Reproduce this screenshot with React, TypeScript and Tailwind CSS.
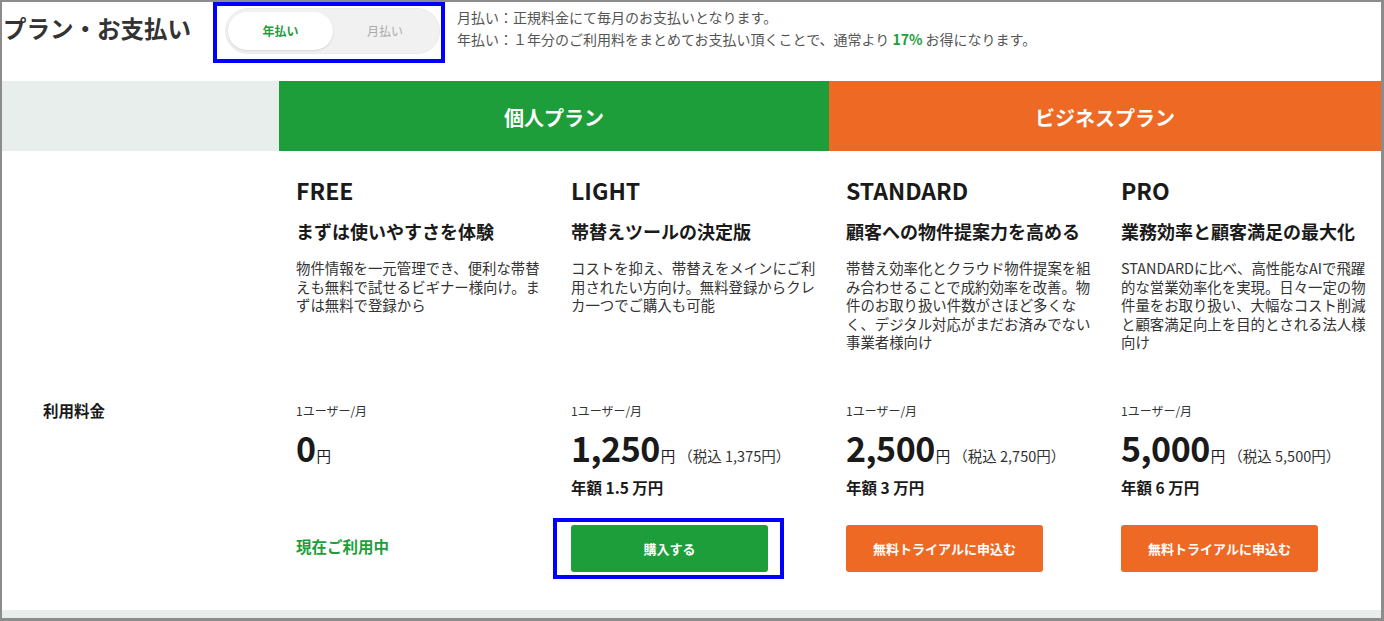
import React from "react";

const GREEN = "bg-[#1e9e3a]";

type Plan = {
  name: string;
  sub: string;
  desc: string[];
  price: string;
  tax?: string;
  annual?: string;
  action: "current" | "buy" | "trial";
};

const plans: Plan[] = [
  {
    name: "FREE",
    sub: "まずは使いやすさを体験",
    desc: ["物件情報を一元管理でき、便利な帯替", "えも無料で試せるビギナー様向け。ま", "ずは無料で登録から"],
    price: "0",
    action: "current",
  },
  {
    name: "LIGHT",
    sub: "帯替えツールの決定版",
    desc: ["コストを抑え、帯替えをメインにご利", "用されたい方向け。無料登録からクレ", "カ一つでご購入も可能"],
    price: "1,250",
    tax: "（税込 1,375円）",
    annual: "年額 1.5 万円",
    action: "buy",
  },
  {
    name: "STANDARD",
    sub: "顧客への物件提案力を高める",
    desc: [
      "帯替え効率化とクラウド物件提案を組",
      "み合わせることで成約効率を改善。物",
      "件のお取り扱い件数がさほど多くな",
      "く、デジタル対応がまだお済みでない",
      "事業者様向け",
    ],
    price: "2,500",
    tax: "（税込 2,750円）",
    annual: "年額 3 万円",
    action: "trial",
  },
  {
    name: "PRO",
    sub: "業務効率と顧客満足の最大化",
    desc: [
      "STANDARDに比べ、高性能なAIで飛躍",
      "的な営業効率化を実現。日々一定の物",
      "件量をお取り扱い、大幅なコスト削減",
      "と顧客満足向上を目的とされる法人様",
      "向け",
    ],
    price: "5,000",
    tax: "（税込 5,500円）",
    annual: "年額 6 万円",
    action: "trial",
  },
];

function PlanColumn({ p }: { p: Plan }) {
  return (
    <div className="flex flex-col pl-[17px]">
      <div className="h-[248px] pt-[24px]">
        <div className="text-[23px] leading-[30px] font-bold text-[#1a1a1a]">{p.name}</div>
        <div className="mt-[13px] text-[18px] leading-[27px] font-bold text-[#1a1a1a] whitespace-nowrap">{p.sub}</div>
        <div className="mt-[14px] text-[14.4px] leading-[18.5px] text-[#333] whitespace-nowrap">
          {p.desc.map((l, i) => (
            <div key={i}>{l}</div>
          ))}
        </div>
      </div>
      <div className="flex-1 pt-[3px]">
        <div className="text-[12px] leading-[18px] text-[#333]">1ユーザー/月</div>
        <div className="mt-[8px] h-[40px] flex items-baseline whitespace-nowrap text-[#1a1a1a]">
          <span className="text-[34px] leading-[40px] font-bold tracking-[-0.5px]">{p.price}</span>
          <span className="text-[14.5px] ml-[1px]">円</span>
          {p.tax && <span className="text-[14.5px] text-[#333] ml-[3px]">{p.tax}</span>}
        </div>
        <div className="mt-[9px] h-[20px] text-[15.5px] leading-[20px] font-bold text-[#1a1a1a]">{p.annual ?? ""}</div>
        <div className="mt-[28px] h-[47px] flex items-center">
          {p.action === "current" && (
            <span className="text-[15.5px] font-bold text-[#1e9e3a] -mt-[3px]">現在ご利用中</span>
          )}
          {p.action === "buy" && (
            <div className="-ml-[18px] -my-[7px] border-[4px] border-[#0000ff] pl-[14px] pr-[12px] py-[3px]">
              <button className={`w-[197px] h-[47px] rounded-[3px] ${GREEN} text-white text-[13px] font-bold`}>
                購入する
              </button>
            </div>
          )}
          {p.action === "trial" && (
            <button className="w-[197px] h-[47px] rounded-[3px] bg-[#ee6a24] text-white text-[13px] font-bold">
              無料トライアルに申込む
            </button>
          )}
        </div>
      </div>
    </div>
  );
}

export default function App() {
  return (
    <div
      className="w-[1384px] h-[621px] bg-white border-2 border-b-[3px] border-r-[3px] border-[#8c8c8c] flex flex-col overflow-hidden"
      style={{ fontFamily: '"Noto Sans CJK JP", "Noto Sans", sans-serif' }}
    >
      {/* top bar */}
      <div className="h-[79px] flex items-start shrink-0">
        <h1 className="pl-[1px] pt-[10px] w-[211px] text-[23.5px] leading-[32px] font-bold text-[#333] whitespace-nowrap">
          プラン・お支払い
        </h1>
        <div className="mt-[0px] w-[232px] h-[61px] border-[4px] border-[#0000ff] pl-[8px] pt-[2px]">
          <div className="w-[215px] h-[46px] rounded-full bg-[#f1f1f1] border border-[#ebebeb] flex items-center px-[2px]">
            <div className="w-[105px] h-[38px] rounded-full bg-white shadow-[0_1px_2px_rgba(0,0,0,0.12)] flex items-center justify-center text-[12px] font-bold text-[#1e9e3a]">
              年払い
            </div>
            <div className="flex-1 flex items-center justify-center text-[12px] text-[#aaa]">月払い</div>
          </div>
        </div>
        <div className="ml-[12px] mt-[4px] text-[14px] leading-[22px] text-[#555] whitespace-nowrap">
          <div>月払い：正規料金にて毎月のお支払いとなります。</div>
          <div>
            年払い：１年分のご利用料をまとめてお支払い頂くことで、通常より{" "}
            <span className="font-bold text-[#1e9e3a]">17%</span> お得になります。
          </div>
        </div>
      </div>

      {/* header row */}
      <div className="h-[70px] grid grid-cols-[277px_550px_1fr] shrink-0">
        <div className="bg-[#e8eeeb]" />
        <div className={`${GREEN} flex items-center justify-center pt-[3px] text-white text-[20px] font-bold`}>個人プラン</div>
        <div className="bg-[#ee6a24] flex items-center justify-center pt-[3px] text-white text-[20px] font-bold">ビジネスプラン</div>
      </div>

      {/* body */}
      <div className="flex-1 grid grid-cols-[277px_275px_275px_275px_1fr]">
        <div className="flex flex-col">
          <div className="h-[248px]" />
          <div className="pt-[1px] pl-[41px] text-[15.5px] leading-[20px] font-bold text-[#1a1a1a]">利用料金</div>
        </div>
        {plans.map((p) => (
          <PlanColumn key={p.name} p={p} />
        ))}
      </div>

      <div className="h-[8px] bg-[#e8eeeb] shrink-0" />
    </div>
  );
}
